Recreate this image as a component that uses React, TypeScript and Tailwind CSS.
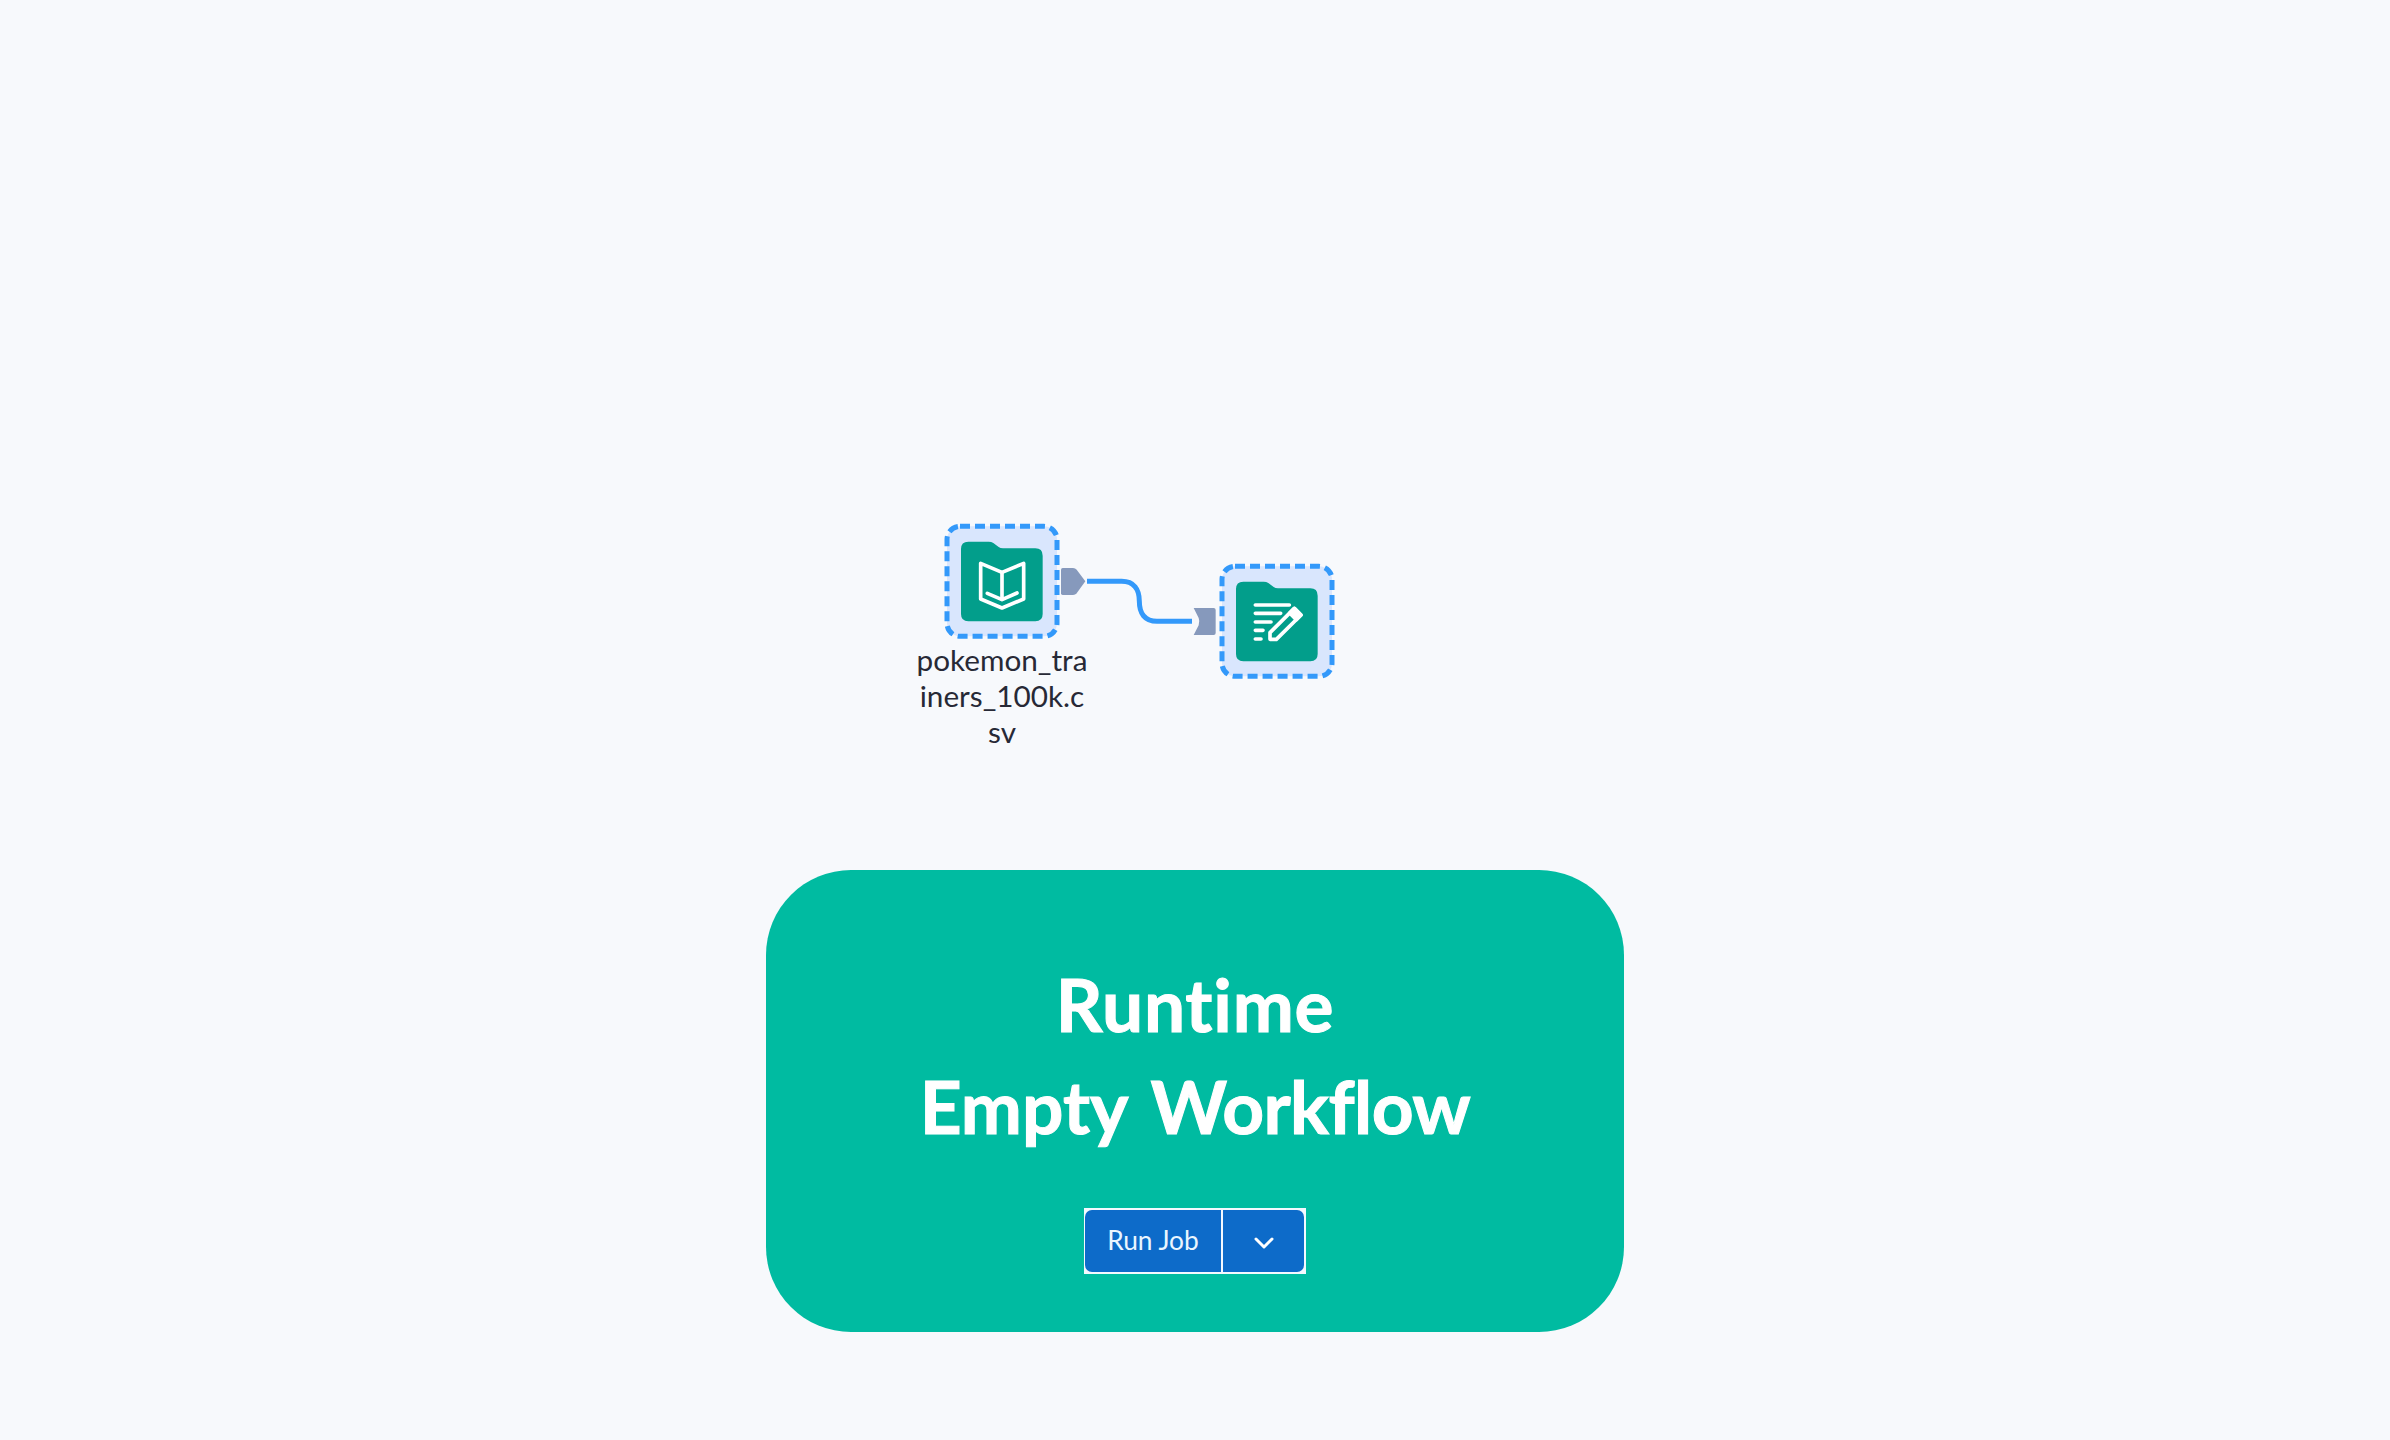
import type { ReactNode } from "react";

function ToolNode({ children }: { children: ReactNode }) {
  return (
    <svg width="130" height="140" viewBox="0 0 390 420" fill="none" className="block">
      <rect x="51" y="49" width="330" height="330" rx="39" fill="#d9e6fd" stroke="#3399fa" strokeWidth="15" strokeDasharray="30 15" />
      <path
        d="M115 95H176Q184 95 190 99L206 111Q211 115 219 115H316Q338 115 338 137V312Q338 334 316 334H115Q93 334 93 312V117Q93 95 115 95Z"
        fill="#029e8b"
      />
      {children}
    </svg>
  );
}

function BookGlyph() {
  return (
    <g stroke="#fff" strokeWidth="11" strokeLinejoin="round" strokeLinecap="round">
      <path d="M152 160L216 187L281 160V267L216 294L152 267Z" />
      <path d="M216 187V268" />
      <path d="M172 250L216 269L261 249" />
    </g>
  );
}

function EditGlyph() {
  return (
    <g stroke="#fff" strokeWidth="11" strokeLinejoin="round" strokeLinecap="round">
      <path d="M151 165H253M151 190H227M151 216H198M151 241H174M151 267H168" />
      <path d="M195 248L268 175L288 195L214 268H195Z" />
      <path d="M254 189L268 175L288 195L274 209Z" fill="#fff" />
    </g>
  );
}

export default function App() {
  return (
    <main className="relative flex h-[1440px] w-[2390px] flex-col items-center overflow-hidden bg-[#f7f9fc] pt-[870px]">
      <div className="absolute left-[930px] top-[510px]">
        <ToolNode>
          <BookGlyph />
        </ToolNode>
      </div>
      <p className="absolute left-[907px] top-[642px] w-[190px] text-center font-[Lato,sans-serif] text-[29.7px] leading-[36px] text-[#272936]">
        pokemon_tra
        <br />
        iners_100k.c
        <br />
        sv
      </p>
      <svg className="absolute left-[1050px] top-[540px]" width="180" height="120" viewBox="0 0 540 360" fill="none">
        <path d="M38 84H69Q76 84 80 89L106 124L80 160Q76 165 69 165H38Q33 165 33 160V89Q33 84 38 84Z" fill="#8699bc" />
        <path d="M111 124H215C252 124 268 148 268 184C268 220 284 244 321 244H426" stroke="#3399fa" strokeWidth="15" />
        <path d="M431 204H491Q497 204 497 210V279Q497 285 491 285H431L446 256Q450 244 446 234Z" fill="#8699bc" />
      </svg>
      <div className="absolute left-[1205px] top-[550px]">
        <ToolNode>
          <EditGlyph />
        </ToolNode>
      </div>

      <section className="flex h-[462px] w-[858px] flex-col items-center rounded-[85px] bg-[#00bba1] pt-[83px]">
        <h1 className="whitespace-nowrap text-center font-['Trebuchet_MS',Lato,sans-serif] text-[73px] font-bold leading-[102px] text-white [-webkit-text-stroke:1px_white] [font-variant-ligatures:none]">
          <span className="block tracking-[0.8px]">Runtime</span>
          <span className="block [word-spacing:6px]">
            Empty <span className="tracking-[-0.6px]">Workflow</span>
          </span>
        </h1>
        <div className="mt-[51px] flex h-[66px] w-[222px] gap-[2px] bg-[#f4f9ff] pb-[2px] pl-px pr-[2px] pt-[2px]">
          <button className="w-[136px] rounded-l-[7px] bg-[#0d6bc9] pb-[2px] font-[Lato,sans-serif] text-[26.3px] leading-none text-[#eaf6ff]">
            Run Job
          </button>
          <button aria-label="More run options" className="flex flex-1 items-center justify-center rounded-r-[7px] bg-[#0d6bc9] pt-[2px]">
            <svg width="20" height="14" viewBox="0 0 20 14" fill="none" stroke="#fff" strokeWidth="3" strokeLinecap="round" strokeLinejoin="round">
              <path d="M2 4L10 12L18 4" />
            </svg>
          </button>
        </div>
      </section>
    </main>
  );
}
